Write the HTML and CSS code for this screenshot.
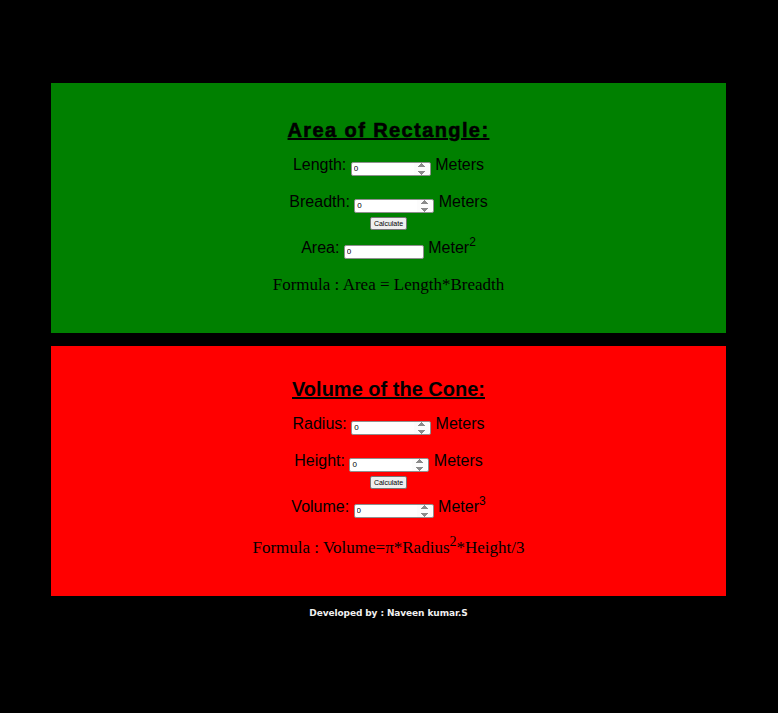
FILE: index.html
```html
<!DOCTYPE html>
<html>
<head>
<meta charset="utf-8">
<title>Calculator</title>
<link rel="stylesheet" href="styles.css">
</head>
<body>
<div class="page">
  <section class="card card-green">
    <h2 class="title title-wide">Area of Rectangle:</h2>
    <div class="row row-first">Length: <input class="field" type="number" value="0"> Meters</div>
    <div class="row row-second">Breadth: <input class="field" type="number" value="0"> Meters</div>
    <div class="row-btn"><button class="btn">Calculate</button></div>
    <div class="row row-result">Area: <input class="field" type="text" value="0"> Meter<sup class="sup">2</sup></div>
    <div class="formula">Formula : Area = Length*Breadth</div>
  </section>
  <section class="card card-red">
    <h2 class="title">Volume of the Cone:</h2>
    <div class="row row-first">Radius: <input class="field" type="number" value="0"> Meters</div>
    <div class="row row-second">Height: <input class="field" type="number" value="0"> Meters</div>
    <div class="row-btn"><button class="btn">Calculate</button></div>
    <div class="row row-result">Volume: <input class="field" type="number" value="0"> Meter<sup class="sup">3</sup></div>
    <div class="formula formula-red">Formula : Volume=π*Radius<sup class="sup sup-formula">2</sup>*Height/3</div>
  </section>
  <footer class="footer">Developed by : Naveen kumar.S</footer>
</div>
</body>
</html>
```
FILE: styles.css
```css
html, body {
  margin: 0;
  padding: 0;
  background: #000;
}
.page {
  padding: 83px 52px 0 51px;
  display: flex;
  flex-direction: column;
  gap: 13px;
  font-family: "Liberation Sans", Arial, sans-serif;
}
.card {
  width: 675px;
  height: 250px;
  box-sizing: border-box;
  padding-top: 35px;
  text-align: center;
  color: #000;
}
.card-green { background: #008000; }
.card-red { background: #ff0000; padding-top: 31px; }
.title {
  margin: 0;
  font-size: 20px;
  line-height: 24px;
  font-weight: bold;
  text-decoration: underline;
}
.title-wide {
  letter-spacing: 1.4px;
  -webkit-text-stroke: 0.6px #000;
}
.row {
  font-size: 16px;
  line-height: 20px;
  height: 20px;
}
.row-first { margin-top: 13px; }
.row-second { margin-top: 17px; }
.row-btn {
  height: 14px;
  margin-top: 5px;
  line-height: 14px;
}
.row-result { margin-top: 7px; }
.field {
  box-sizing: border-box;
  width: 80px;
  height: 14px;
  font-family: "Liberation Sans", Arial, sans-serif;
  font-size: 8px;
  padding: 0 1px 0 2px;
  border: 1px solid #8f8f8f;
  border-radius: 2px;
  background: #fff;
  vertical-align: -1px;
}
.field::-webkit-inner-spin-button {
  opacity: 1;
  height: 12px;
}
.btn {
  font-family: "Liberation Sans", Arial, sans-serif;
  font-size: 7px;
  height: 13px;
  padding: 0 3px;
  border: 1px solid #767676;
  border-radius: 2px;
  background: #efefef;
  color: #000;
  vertical-align: top;
}
.sup {
  font-size: 12px;
  line-height: 0;
  vertical-align: 7px;
}
.sup-formula {
  font-size: 14px;
}
.formula {
  margin-top: 17px;
  font-family: "Liberation Serif", "Times New Roman", serif;
  font-size: 17px;
  line-height: 20px;
}
.formula-red { margin-top: 21px; }
.footer {
  margin-top: -2px;
  text-align: center;
  color: #f0f0f0;
  font-family: "DejaVu Sans", Verdana, sans-serif;
  font-weight: bold;
  font-size: 9px;
  letter-spacing: -0.1px;
  line-height: 12px;
}
```
